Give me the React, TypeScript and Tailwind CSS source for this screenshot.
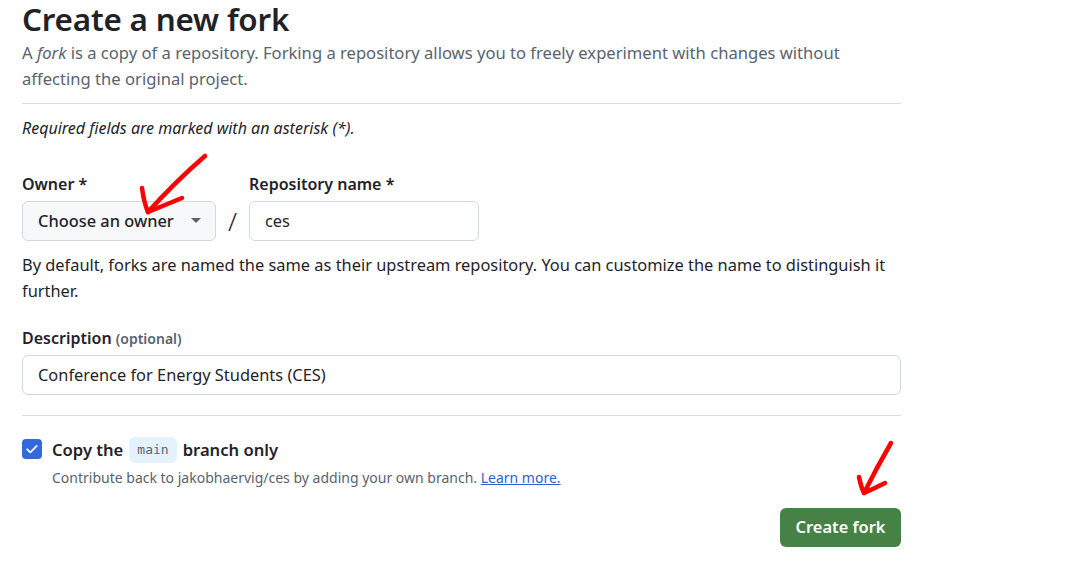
import React from "react";

export default function App() {
  return (
    <div className="relative w-[1077px] h-[562px] bg-white overflow-hidden" style={{ fontFamily: '"Noto Sans", "Open Sans", sans-serif' }}>
      <div className="w-[879px] ml-[22px] text-[#1f2328]">
        <h1 className="text-[31.4px] leading-[38px] font-semibold tracking-[-0.2px]">Create a new fork</h1>
        <p className="text-[16.6px] leading-[26px] text-[#59636e] mt-[2px]">
          A <em>fork</em> is a copy of a repository. Forking a repository allows you to freely experiment with changes without affecting the original project.
        </p>
        <div className="border-t border-[#d8dee4] mt-[11px]" />
        <p className="italic text-[16px] leading-[24px] mt-[12px]">Required fields are marked with an asterisk (*).</p>

        <div className="flex items-end mt-[32px]">
          <div className="flex flex-col">
            <label className="text-[16px] leading-[24px] font-semibold">Owner *</label>
            <button className="mt-[5px] h-[40px] w-[194px] rounded-[6px] border border-[#d1d9e0] bg-[#f6f8fa] flex items-center pl-[15px] pr-[14px] text-[16.4px] font-medium text-[#1f2328]">
              <span>Choose an owner</span>
              <svg className="ml-auto" width="10" height="6" viewBox="0 0 10 6"><path d="M0 0h10L5 5z" fill="#59636e" /></svg>
            </button>
          </div>
          <div className="w-[33px] h-[40px] flex items-center justify-center text-[26px] font-light">/</div>
          <div className="flex flex-col">
            <label className="text-[16px] leading-[24px] font-semibold">Repository name *</label>
            <div className="mt-[5px] h-[40px] w-[230px] rounded-[6px] border border-[#d1d9e0] flex items-center pl-[15px] text-[16.4px]">ces</div>
          </div>
        </div>
        <p className="text-[16.4px] leading-[26px] text-[#1f2328] mt-[11px]">
          By default, forks are named the same as their upstream repository. You can customize the name to distinguish it further.
        </p>

        <div className="mt-[22px] text-[16px] leading-[24px] font-semibold">
          Description <span className="text-[14px] font-semibold text-[#59636e]">(optional)</span>
        </div>
        <div className="mt-[4px] h-[40px] rounded-[6px] border border-[#d1d9e0] flex items-center pl-[15px] text-[16.4px]">
          Conference for Energy Students (CES)
        </div>
        <div className="border-t border-[#d8dee4] mt-[20px]" />

        <div className="flex mt-[21px]">
          <div className="w-[20px] h-[20px] rounded-[4px] bg-[#3369dc] flex items-center justify-center mt-[2px]">
            <svg width="16" height="16" viewBox="0 0 16 16"><path d="M3.2 8.3l3.1 3.1L12.8 4.9" stroke="white" strokeWidth="1.8" fill="none" strokeLinecap="round" strokeLinejoin="round" /></svg>
          </div>
          <div className="ml-[10px]">
            <div className="text-[16.6px] leading-[24px] font-semibold flex items-center">
              Copy the
              <code className="mx-[6px] px-[8px] h-[26px] rounded-[6px] bg-[#e3f2fc] text-[13px] font-normal text-[#59636e] flex items-center" style={{ fontFamily: '"DejaVu Sans Mono", monospace' }}>main</code>
              branch only
            </div>
            <div className="text-[14px] leading-[20px] text-[#59636e] mt-[5px]">
              Contribute back to jakobhaervig/ces by adding your own branch. <a className="text-[#2f5fd0] underline">Learn more.</a>
            </div>
          </div>
        </div>

        <div className="flex justify-end mt-[20px]">
          <button className="h-[39px] w-[121px] rounded-[6px] bg-[#468245] text-white text-[16.4px] font-semibold">Create fork</button>
        </div>
      </div>

      <svg className="absolute left-0 top-0 pointer-events-none" width="1077" height="562">
        <g stroke="#ff0000" strokeWidth="4.5" fill="none" strokeLinecap="round" strokeLinejoin="round">
          <path d="M205 156 Q175 182 148 212" />
          <path d="M142 188 Q144 203 148 212 Q165 205 182 198" />
          <path d="M891 443 Q877 467 864 493" />
          <path d="M859 477 Q861 487 864 493 Q875 488 885 483" />
        </g>
      </svg>
    </div>
  );
}
